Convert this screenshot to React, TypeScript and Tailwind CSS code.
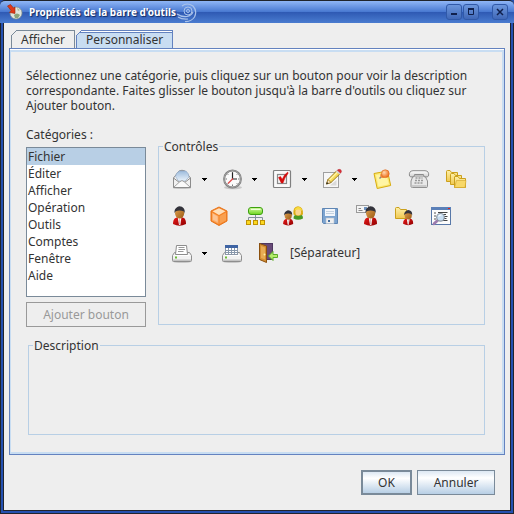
import { useState, ReactNode } from "react";

const categories = [
  "Fichier",
  "Éditer",
  "Afficher",
  "Opération",
  "Outils",
  "Comptes",
  "Fenêtre",
  "Aide",
];

function Icon({ children }: { children: ReactNode }) {
  return (
    <svg width="22" height="22" viewBox="0 0 22 22" aria-hidden="true">
      {children}
    </svg>
  );
}

function Gradients() {
  return (
    <svg width="0" height="0" className="absolute" aria-hidden="true">
      <defs>
        <linearGradient id="skin" x1="0" y1="0" x2="1" y2="1">
          <stop offset="0" stopColor="#e0a050" />
          <stop offset="1" stopColor="#9c5c14" />
        </linearGradient>
        <linearGradient id="red" x1="0" y1="0" x2="1" y2="1">
          <stop offset="0" stopColor="#e81818" />
          <stop offset="1" stopColor="#8e0000" />
        </linearGradient>
        <linearGradient id="paper" x1="0" y1="0" x2="0" y2="1">
          <stop offset="0" stopColor="#ffffff" />
          <stop offset="1" stopColor="#cfcfcf" />
        </linearGradient>
        <linearGradient id="folder" x1="0" y1="0" x2="0" y2="1">
          <stop offset="0" stopColor="#fdf0a8" />
          <stop offset="1" stopColor="#f0c850" />
        </linearGradient>
        <linearGradient id="green" x1="0" y1="0" x2="0" y2="1">
          <stop offset="0" stopColor="#d4fba4" />
          <stop offset="1" stopColor="#6cd41c" />
        </linearGradient>
        <linearGradient id="sheet" x1="0" y1="0" x2="0" y2="1">
          <stop offset="0" stopColor="#9dbbdc" />
          <stop offset="1" stopColor="#eaf2fa" />
        </linearGradient>
        <radialGradient id="ball" cx="0.35" cy="0.35" r="0.7">
          <stop offset="0" stopColor="#ffd9b0" />
          <stop offset="1" stopColor="#ee6a14" />
        </radialGradient>
      </defs>
    </svg>
  );
}

function Person() {
  return (
    <>
      <path d="M2 19C2 14.500 4 12.500 6.500 12.500H11C13.500 12.500 15 14.500 15 19Q8.500 22.500 2 19Z" fill="url(#red)" />
      <path d="M6.800 12.800H10.400L9.300 20H8Z" fill="#fff" />
      <path d="M8.200 13.500H9.100L9.300 19.500H8Z" fill="#d8b8b8" />
      <ellipse cx="8.600" cy="8.200" rx="4.600" ry="5.300" fill="url(#skin)" />
      <path d="M3.600 8C3 4 5.500 2 8.500 1.200C12 1.500 14.400 3.800 13.600 8L12.500 6.300Q8.500 4.800 4.800 6.300Z" fill="#33333b" />
    </>
  );
}

function Envelope() {
  return (
    <Icon>
      <ellipse cx="11" cy="20" rx="9" ry="1" fill="#c4c4c4" />
      <path d="M2.500 10L8 3Q11 1.500 14 3L19.500 10V19.500H2.500Z" fill="#f4f4f4" stroke="#8c8c8c" />
      <path d="M4.500 8.500Q5 4.500 8.500 3H15Q18 5.500 18 9L14 13H7.500Z" fill="url(#sheet)" stroke="#8ea6c2" strokeWidth="0.600" />
      <path d="M2.500 10L8 14.200H14L19.500 10V19.500H2.500Z" fill="#f1f1f1" stroke="#8c8c8c" />
      <path d="M3 19L8.500 14L11 12.500L13.500 14L19 19" fill="#fafafa" stroke="#999" strokeWidth="0.900" />
    </Icon>
  );
}

function Clock() {
  return (
    <Icon>
      <ellipse cx="12" cy="19.500" rx="9" ry="1.800" fill="#c8c8c8" />
      <circle cx="11.500" cy="11" r="8.400" fill="#fbfbfb" stroke="#7c7c7c" strokeWidth="2" />
      <circle cx="11.500" cy="11" r="8.400" fill="none" stroke="#a8a8a8" strokeWidth="0.800" />
      <path d="M11.500 4V5.500M11.500 16.500V18M4.500 11H6M17 11H18.500M6.600 6.100L7.300 6.800M16.400 6.100L15.700 6.800M6.600 15.900L7.300 15.200M16.400 15.900L15.700 15.200" stroke="#777" />
      <path d="M11.500 4.500V11H16" fill="none" stroke="#222" strokeWidth="1.200" />
      <path d="M12 10.500L7 15.500" stroke="#e04848" strokeWidth="1.200" />
    </Icon>
  );
}

function CheckBoxIcon() {
  return (
    <Icon>
      <rect x="2.500" y="2.500" width="17" height="17" rx="1" fill="#fafafa" stroke="#808080" strokeWidth="1.200" />
      <rect x="6.500" y="6.500" width="9" height="9" fill="#f5f5f5" stroke="#8a8a8a" strokeWidth="1.200" />
      <path d="M7.500 9.500L9.500 8.500L11.200 11.300Q13 6.500 16.800 4L17 5.500Q13.500 9.500 12 15H10.300Z" fill="#d40d0d" stroke="#d40d0d" strokeWidth="0.500" />
    </Icon>
  );
}

function Pencil() {
  return (
    <Icon>
      <rect x="2.500" y="4.500" width="15" height="15" fill="#f7f7f7" stroke="#a0a0a0" />
      <path d="M5 17.500H15.500V12L9 17.500Z" fill="#dadada" />
      <path d="M5.500 16L7 11.500L15.500 3L18.800 6L10 14.500Z" fill="#f8dc58" stroke="#8e6c12" strokeWidth="0.900" />
      <path d="M8.500 12L16.500 4" stroke="#fff4a8" strokeWidth="1.200" />
      <path d="M5.500 16L7 11.500L10 14.500Z" fill="#fae8c4" stroke="#8e6c12" strokeWidth="0.700" />
      <path d="M5.200 16.300L6 14L7.500 15.500Z" fill="#222" />
      <path d="M15 3.500L16.500 2L19.700 5L18.300 6.500Z" fill="#d4d4d4" />
      <path d="M16.300 2.200Q18 0.500 19.800 1.800Q21.300 3.300 19.700 5.200Z" fill="#dc2c34" stroke="#b03038" strokeWidth="0.500" />
    </Icon>
  );
}

function Note() {
  return (
    <Icon>
      <path d="M3 5.500L16.500 3L19.700 17.500L6.200 20.500Z" fill="#fbe972" stroke="#d8ac10" />
      <path d="M5 7L15 5.200L17.800 16.200L7.500 18.500Z" fill="#fff5a4" />
      <path d="M8.500 10.500L11.500 7.500" stroke="#888" strokeWidth="1.500" />
      <path d="M9.500 6Q12 5.500 13.500 9.500L11 10Q8.500 8.500 9.500 6Z" fill="#f08838" />
      <circle cx="14.300" cy="5.700" r="3.900" fill="url(#ball)" stroke="#e07024" strokeWidth="0.700" />
    </Icon>
  );
}

function Phone() {
  return (
    <Icon>
      <path d="M5 8L3 13V18.500Q3 19.500 4.500 19.500H18Q19.500 19.500 19.500 18.500V13L17 8Z" fill="#e8e8e8" stroke="#909090" />
      <path d="M1.500 8Q0.500 3 5 2.700H17Q21.500 3 20.500 8Q20 9.500 16 8.700L15.500 6.500H6.500L6 8.700Q2 9.500 1.500 8Z" fill="url(#paper)" stroke="#8c8c8c" />
      <path d="M7.500 10H14.500M7 12.500H15M6.500 15H15.500" stroke="#999" strokeWidth="1.500" strokeDasharray="2 1" />
      <path d="M4 18H18.500" stroke="#c0c0c0" strokeWidth="1.500" />
    </Icon>
  );
}

function Folder() {
  return (
    <path d="M0.500 1.500Q0.500 0.500 1.500 0.500H4L5.500 2.500H11.500V11.500H0.500Z" fill="url(#folder)" stroke="#cba01c" />
  );
}

function Folders() {
  return (
    <Icon>
      <g transform="translate(1 2)"><Folder /></g>
      <g transform="translate(5 5)"><Folder /></g>
      <path d="M9.500 9Q9.500 8.500 10 8.500H13L14.500 10.500H20.500V19.500H9.500Z" fill="url(#folder)" stroke="#cba01c" />
      <path d="M9.500 19.500L11.500 12.500H21L20 19.500Z" fill="#f8d868" stroke="#d2a42c" strokeWidth="0.600" />
    </Icon>
  );
}

function Cube() {
  return (
    <Icon>
      <path d="M3 6L11 2L19 6V16L11 20.500L3 16Z" fill="#f58224" stroke="#e8741a" strokeLinejoin="round" />
      <path d="M4.500 6.300L11 3.200L17.500 6.300L11 10Z" fill="#ffe0bc" />
      <path d="M4 7.500L10.500 11V19L4 15.500Z" fill="#fbaa64" />
      <path d="M18 7.500L11.500 11V19L18 15.500Z" fill="#f9a050" />
      <path d="M5 8.800L9.600 11.500V17L5 14.800Z" fill="#fdc494" />
    </Icon>
  );
}

function Network() {
  return (
    <Icon>
      <path d="M10.500 9V16M3.500 16V12.500H17.500V16" fill="none" stroke="#84909c" />
      <rect x="3.500" y="2.500" width="14" height="7" rx="2.500" fill="url(#green)" stroke="#3da010" />
      <path d="M6 4.500H15.500" stroke="#ecffd8" />
      <rect x="1.500" y="15.500" width="4" height="4" fill="#fcd820" stroke="#bf9204" />
      <rect x="8.500" y="15.500" width="4" height="4" fill="#fcd820" stroke="#bf9204" />
      <rect x="15.500" y="15.500" width="4" height="4" fill="#fcd820" stroke="#bf9204" />
    </Icon>
  );
}

function Couple() {
  return (
    <Icon>
      <path d="M11.500 13.500C11.500 10.500 13 9.500 14.500 9.500H18C20 9.500 21 11 21 13.500Q16 16 11.500 13.500Z" fill="#4a9a24" />
      <path d="M11.500 9.500Q10.500 1.500 16 1.200Q21.500 1.500 21 9.500Q16 12 11.500 9.500Z" fill="#dcac14" />
      <ellipse cx="16.200" cy="7" rx="2.900" ry="3.500" fill="#fbd48c" />
      <path d="M12.500 5.500Q13 2 16.500 2Q20 2.500 20 6Q17 3.500 12.500 5.500Z" fill="#f8dc40" />
      <g transform="translate(-0.500 4.200) scale(0.780)"><Person /></g>
    </Icon>
  );
}

function Floppy() {
  return (
    <Icon>
      <path d="M3.500 3.500H18.500V18.500H4.500L3.500 17.500Z" fill="#7ca4d0" stroke="#5f86b4" />
      <rect x="6" y="4" width="10" height="7" fill="#f2f6fb" />
      <path d="M7 6.500H15M7 8.500H15" stroke="#c4d2e0" />
      <rect x="7" y="13" width="8" height="5.500" fill="#f0f0f0" stroke="#b6c0cc" strokeWidth="0.600" />
      <rect x="9" y="15" width="2" height="2" fill="#466fa0" />
    </Icon>
  );
}

function CardPerson() {
  return (
    <Icon>
      <rect x="0.500" y="0.500" width="12" height="7" fill="#f4f4f4" stroke="#9a9a9a" />
      <path d="M2.500 3.500H5M2.500 5.500H6.500" stroke="#888" />
      <rect x="8" y="2" width="3" height="3" fill="#6f94c0" />
      <g transform="translate(6 0)"><Person /></g>
    </Icon>
  );
}

function FolderPerson() {
  return (
    <Icon>
      <g transform="translate(2 2)"><Folder /></g>
      <g transform="translate(8.500 4) scale(0.780)"><Person /></g>
    </Icon>
  );
}

function Preview() {
  return (
    <Icon>
      <rect x="1.500" y="2.500" width="19" height="17" fill="#fcfcfc" stroke="#5878a8" />
      <path d="M1 2H21V5H1Z" fill="#5b80b8" />
      <rect x="18" y="3" width="2" height="1" fill="#dc2424" />
      <path d="M4.500 8H5.500M4.500 11H5.500M4.500 14H5.500" stroke="#222" strokeWidth="1.300" />
      <path d="M8 7.500H17.500M8 9.500H16M13 11.500H17.500M13 13.500H16.500M13 15.500H17.500" stroke="#444" />
      <path d="M7.500 15.500L4 18.800" stroke="#9c7cae" strokeWidth="2.800" strokeLinecap="round" />
      <circle cx="10.500" cy="12.300" r="3.800" fill="#c8def2" stroke="#8c98a4" strokeWidth="1.200" />
      <path d="M8.500 11.500Q9.500 9.800 11.500 10" fill="none" stroke="#fff" strokeWidth="1.200" />
    </Icon>
  );
}

function PrinterBody() {
  return (
    <>
      <ellipse cx="11" cy="19.800" rx="9.500" ry="0.900" fill="#bcbcbc" />
      <path d="M1.500 13.500L3.500 10.500H18.500L20.500 13.500V18.500Q20.500 19.500 19.500 19.500H2.500Q1.500 19.500 1.500 18.500Z" fill="#f2f2f2" stroke="#8e8e8e" />
      <path d="M2 17.500H20V19H2Z" fill="#c4c4c4" />
      <path d="M3.500 13.500H18.500" stroke="#fff" />
      <rect x="4" y="14.500" width="2" height="2" fill="#6cbc38" />
    </>
  );
}

function Printer() {
  return (
    <Icon>
      <PrinterBody />
      <path d="M5.500 3.500H15.500L16.500 12.500H4.500Z" fill="#fff" stroke="#8c8c8c" />
      <path d="M7.500 5.500H13.500M7.500 7.500H14M7 9.500H12.500" stroke="#999" />
    </Icon>
  );
}

function PrinterTable() {
  return (
    <Icon>
      <PrinterBody />
      <rect x="4.500" y="3.500" width="12" height="9" fill="#fff" stroke="#8c98a8" />
      <path d="M4 3H17V6H4Z" fill="#3e64a4" />
      <path d="M4.500 8.500H17M4.500 10.500H17M7.500 6V12M10.500 6V12M13.500 6V12" stroke="#8898ac" />
    </Icon>
  );
}

function Door() {
  return (
    <Icon>
      <rect x="1.500" y="1.500" width="13" height="16" fill="#684a78" stroke="#4e3860" />
      <path d="M1.500 1.500L8.500 4V20.500L1.500 17.500Z" fill="#d48e32" stroke="#8c500c" />
      <path d="M3 4L7 5.500V17.500L3 16Z" fill="#e8ac54" />
      <circle cx="6.500" cy="12.500" r="1" fill="#fff0a0" />
      <path d="M10.500 14L15 9.500V12.500H19.500V15.500H15V18.500Z" fill="#b4ec6c" stroke="#5cac28" />
    </Icon>
  );
}

const rows = [
  [
    { label: "Message", icon: Envelope, menu: true },
    { label: "Rendez-vous", icon: Clock, menu: true },
    { label: "Tâche", icon: CheckBoxIcon, menu: true },
    { label: "Modifier", icon: Pencil, menu: true },
    { label: "Note", icon: Note },
    { label: "Appel", icon: Phone },
    { label: "Dossiers", icon: Folders },
  ],
  [
    { label: "Contact", icon: () => <Icon><Person /></Icon> },
    { label: "Ressource", icon: Cube },
    { label: "Organisation", icon: Network },
    { label: "Groupe", icon: Couple },
    { label: "Enregistrer", icon: Floppy },
    { label: "Carte de visite", icon: CardPerson },
    { label: "Dossier partagé", icon: FolderPerson },
    { label: "Aperçu", icon: Preview },
  ],
  [
    { label: "Imprimer", icon: Printer, menu: true },
    { label: "Imprimer le calendrier", icon: PrinterTable },
    { label: "Quitter", icon: Door },
  ],
];

function ToolButton({ label, icon: Glyph, menu }: { label: string; icon: () => ReactNode; menu?: boolean }) {
  return (
    <div className="flex">
      <button type="button" aria-label={label} className="flex items-start w-[37px] h-[37px] pl-2 pt-2">
        <Glyph />
      </button>
      {menu && (
        <button type="button" aria-label={`${label} : options`} className="flex items-start w-[13px] h-[37px] pl-[2px] pt-[18px]">
          <svg width="5" height="3" viewBox="0 0 5 3" shapeRendering="crispEdges" aria-hidden="true">
            <path d="M0 0H5V1H4V2H3V3H2V2H1V1H0Z" fill="#000" />
          </svg>
        </button>
      )}
    </div>
  );
}

function TitleBar() {
  const control =
    "w-4 h-4 flex items-center justify-center rounded-[3px] border border-[#3059a8] bg-linear-to-b from-[#6c96dc] to-[#4068b8]";
  return (
    <header className="h-[23px] flex items-center pl-[7px] pr-[6px] border-t border-[#20242c] rounded-t-[5px] bg-[linear-gradient(#8fb6f6,#4a7ad2_48%,#2f5ab4_52%,#4a7cd0)]">
      <svg width="16" height="16" viewBox="0 0 16 16" aria-hidden="true">
        <circle cx="9" cy="9" r="6" fill="#dfe4dc" stroke="#8a948c" strokeWidth="0.700" />
        <path d="M7 11Q10 8 13 11L11 14H8Z" fill="#8aa47c" />
        <path d="M10 4L13 6L11 7Z" fill="#a8b89c" />
        <path d="M0.500 2L3.500 0.500L6.500 4L8 3V9.500L2.500 8.500L4 6.500Z" fill="#e03818" stroke="#98240c" strokeWidth="0.600" />
      </svg>
      <h1 className="ml-[6px] font-['Noto_Sans',sans-serif] text-[10px] font-bold text-white whitespace-nowrap [text-shadow:1px_1px_1px_#102860]">
        Propriétés de la barre d'outils
      </h1>
      <svg width="22" height="22" viewBox="0 0 22 22" fill="none" stroke="#a9c2ea" aria-hidden="true">
        <circle cx="12" cy="10" r="1.500" />
        <circle cx="12" cy="10" r="4" />
        <path d="M6 5Q11 1 17 5Q21.500 10 18.500 16Q15 21 9 20.500" strokeWidth="1.200" />
        <path d="M1 13Q5 16 11 15.500Q15.500 14.500 17 11M2 16Q6 18.500 12 18" strokeWidth="1.200" />
      </svg>
      <div className="ml-auto flex">
        <button type="button" aria-label="Réduire" className={control}>
          <svg width="8" height="8" viewBox="0 0 8 8" aria-hidden="true"><path d="M1 6H7" stroke="#10204c" strokeWidth="2" /></svg>
        </button>
        <button type="button" aria-label="Agrandir" className={`${control} ml-px`}>
          <svg width="8" height="8" viewBox="0 0 8 8" aria-hidden="true"><path d="M1.500 1.500H6.500V6.500H1.500Z" fill="none" stroke="#10204c" /><path d="M1 1H7" stroke="#10204c" strokeWidth="2" /></svg>
        </button>
        <button type="button" aria-label="Fermer" className={`${control} ml-[13px]`}>
          <svg width="8" height="8" viewBox="0 0 8 8" aria-hidden="true"><path d="M1 1L7 7M7 1L1 7" stroke="#10204c" strokeWidth="1.500" /></svg>
        </button>
      </div>
    </header>
  );
}

function Tab({ label, active, onClick }: { label: string; active: boolean; onClick: () => void }) {
  return (
    <button
      type="button"
      role="tab"
      aria-selected={active}
      onClick={onClick}
      className={`relative h-[18px] pl-[9px] pr-[9px] border border-b-0 ${
        active ? "border-[#6382bf] bg-[#c8ddf2]" : "border-[#7a8a99] bg-[#eee]"
      }`}>
      {active && <span className="absolute inset-x-0 top-0 border-t border-white border-b border-b-[#6382bf]" />}
      <svg width="6" height="6" viewBox="0 0 6 6" className="absolute -left-px -top-px" aria-hidden="true">
        <path d="M0 0H6L0 6Z" fill="#eee" />
        <path d="M0 6L6 0" stroke={active ? "#6382bf" : "#7a8a99"} />
      </svg>
      {label}
    </button>
  );
}

export default function App() {
  const [tab, setTab] = useState("Personnaliser");
  const [category, setCategory] = useState("Fichier");

  return (
    <div className="min-h-screen flex flex-col bg-[#2450b0] font-['Noto_Sans',sans-serif] text-[12px] leading-[15px] text-[#333]">
      <Gradients />
      <TitleBar />
      <div className="flex-1 flex flex-col border-x border-b border-[#20242c] px-[2px] pb-[2px]">
        <main className="flex-1 flex flex-col border-x border-b border-[#20242c] bg-[#eee] pt-[7px] pl-[5px] pr-[5px]">
          <div role="tablist" className="flex gap-px pl-[2px]">
            {["Afficher", "Personnaliser"].map((name) => (
              <Tab key={name} label={name} active={tab === name} onClick={() => setTab(name)} />
            ))}
          </div>

          <div role="tabpanel" className="flex-1 flex flex-col border border-[#6382bf] bg-[#eee] shadow-[inset_0_1px_0_#fff,inset_-2px_-2px_0_#c8ddf2,inset_1px_3px_0_#c8ddf2] pt-[19px] pl-4 pr-[19px] pb-[19px]">
            <p>
              Sélectionnez une catégorie, puis cliquez sur un bouton pour voir la description
              correspondante. Faites glisser le bouton jusqu'à la barre d'outils ou cliquez sur
              Ajouter bouton.
            </p>

            <div className="mt-[14px] flex gap-3">
              <div className="w-[120px] flex flex-col">
                <label htmlFor="categories">Catégories :</label>
                <select
                  id="categories"
                  size={8}
                  value={category}
                  onChange={(e) => setCategory(e.target.value)}
                  className="mt-[5px] h-[150px] w-[120px] overflow-hidden border border-[#7a8a99] bg-white outline-none">
                  {categories.map((name) => (
                    <option key={name} className="h-[17px] min-h-0 p-0 pl-px leading-[17px] text-[#333] checked:bg-[linear-gradient(#b8cfe5,#b8cfe5)]">
                      {name}
                    </option>
                  ))}
                </select>
                <button type="button" disabled className="mt-[5px] h-[25px] border border-[#999] text-[#999]">
                  Ajouter bouton
                </button>
              </div>

              <fieldset className="flex-1 mt-3 mb-[2px] border border-[#b8cfe5] pl-1">
                <legend className="px-px">Contrôles</legend>
                <div className="pt-[6px]">
                  {rows.map((row, i) => (
                    <div key={i} className="flex items-center">
                      {row.map((tool) => (
                        <ToolButton key={tool.label} {...tool} />
                      ))}
                      {i === rows.length - 1 && <button type="button" className="pl-[3px]">[Séparateur]</button>}
                    </div>
                  ))}
                </div>
              </fieldset>
            </div>

            <fieldset className="flex-1 mt-[11px] ml-[2px] border border-[#b8cfe5]">
              <legend className="ml-1 px-px">Description</legend>
            </fieldset>
          </div>

          <footer className="flex justify-end gap-[5px] pt-[15px] pr-[10px] pb-[15px]">
            <button type="button" className="h-[25px] w-[51px] border-2 border-[#7a8a99] bg-linear-to-b from-[#dde8f3] via-white via-30% to-[#b8cfe5]">
              OK
            </button>
            <button type="button" className="h-[25px] w-[78px] border border-[#7a8a99] bg-linear-to-b from-[#dde8f3] via-white via-30% to-[#b8cfe5]">
              Annuler
            </button>
          </footer>
        </main>
      </div>
    </div>
  );
}
